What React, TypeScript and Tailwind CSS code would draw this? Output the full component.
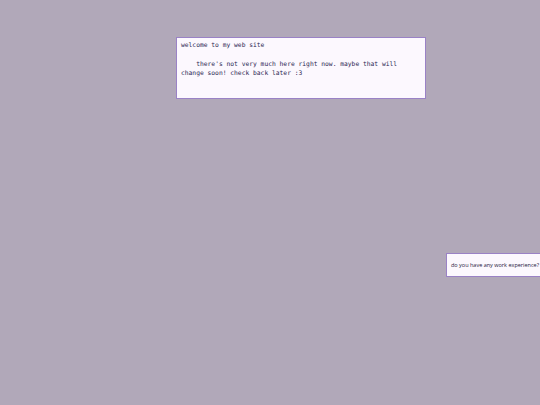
export default function App() {
  return (
    <div className="min-h-[405px] w-[540px] overflow-hidden bg-[#b1a8b9] pt-[37px]">
      <div className="ml-[176px] h-[62px] w-[250px] border border-[#9a82c6] bg-[#fcf8fe] px-[4px] pt-[2px] font-['DejaVu_Sans_Mono',monospace] text-[6.3px] leading-[9.3px] text-[#2b1f52] whitespace-pre-wrap">
        {"welcome to my web site\n\n    there's not very much here right now. maybe that will\nchange soon! check back later :3"}
      </div>
      <div className="ml-[446px] mt-[154px] flex h-[24px] w-[110px] items-center border border-[#9a82c6] bg-[#fcf8fe] pl-[4px] font-['Open_Sans',sans-serif] text-[5.5px] whitespace-nowrap text-[#1f1640]">
        do you have any work experience?
      </div>
    </div>
  )
}
